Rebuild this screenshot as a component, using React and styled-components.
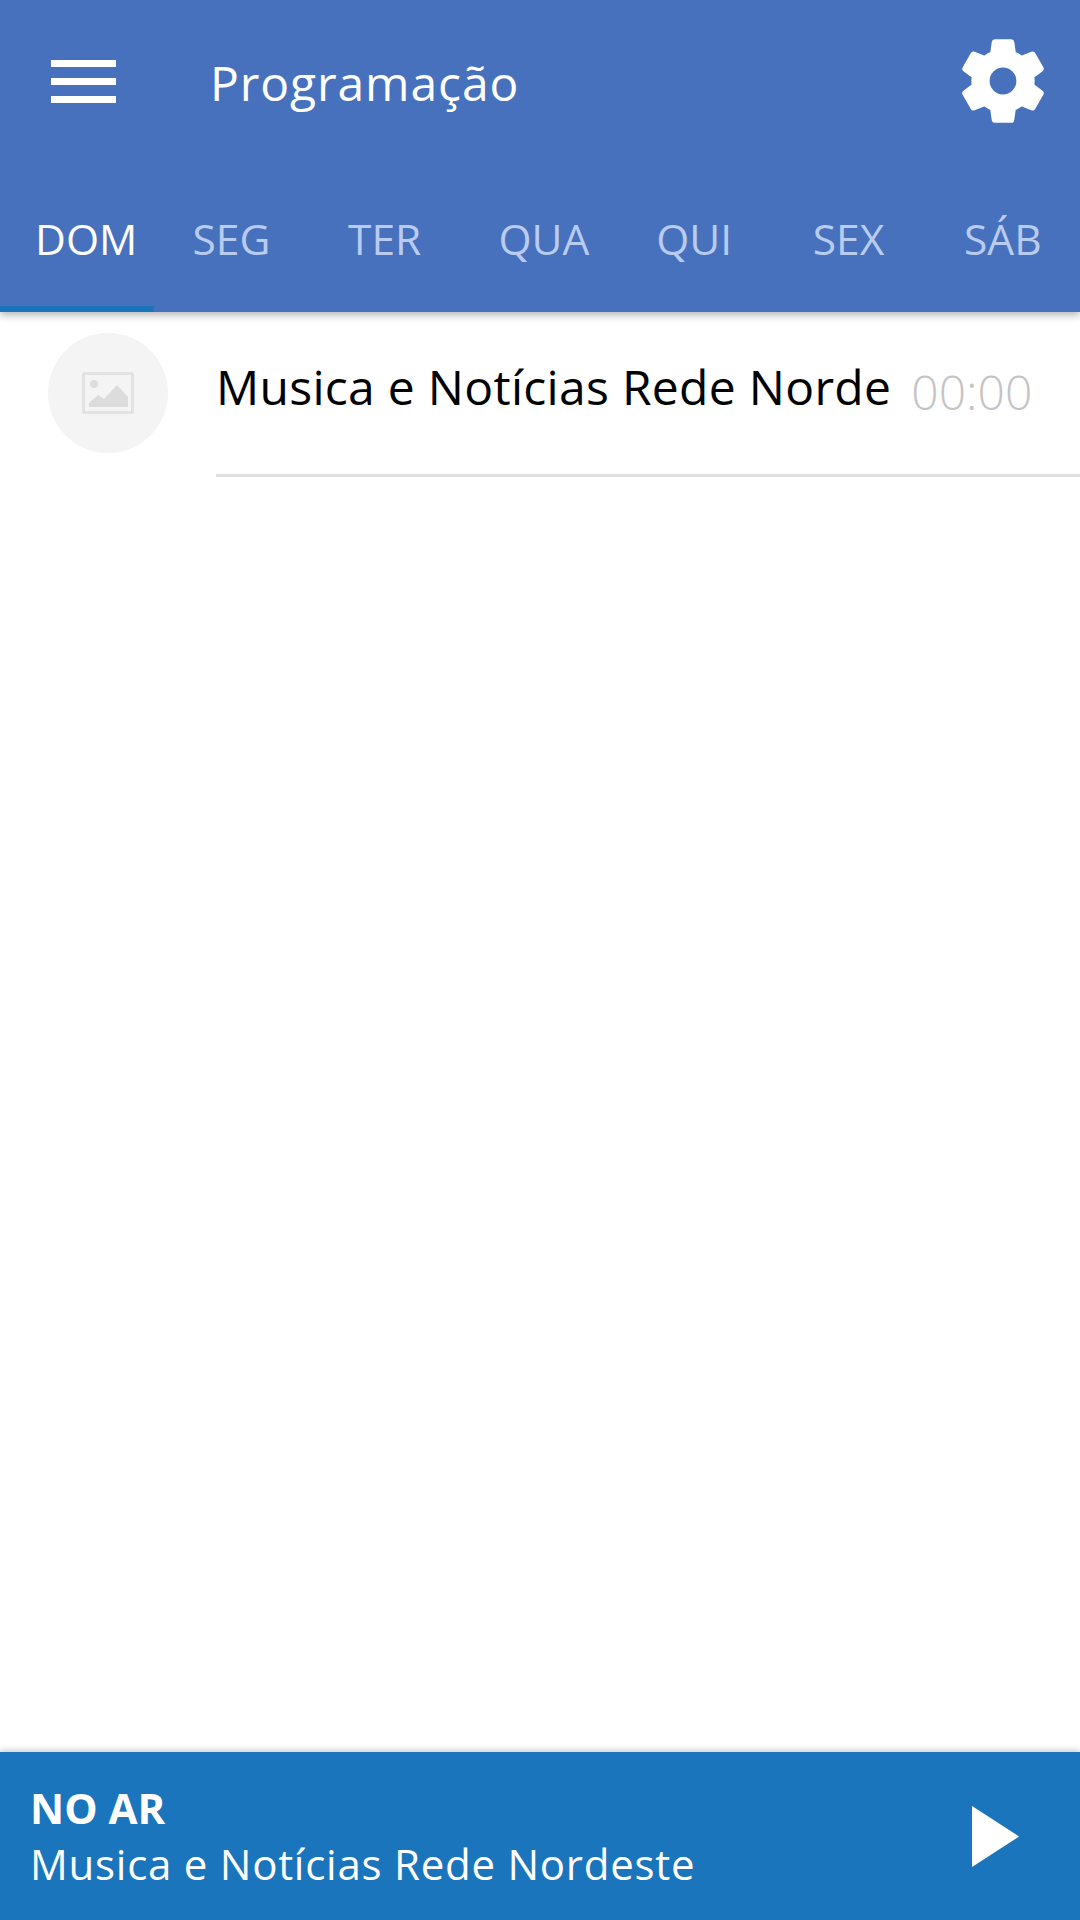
import React from "react";
import styled, { createGlobalStyle } from "styled-components";

const days = [
  { label: "DOM", active: true, shift: 18 },
  { label: "SEG" },
  { label: "TER", shift: -2 },
  { label: "QUA", shift: 8 },
  { label: "QUI" },
  { label: "SEX" },
  { label: "SÁB" },
];

const GlobalStyle = createGlobalStyle`
  * {
    box-sizing: border-box;
  }

  body {
    margin: 0;
    background: #fff;
    font-family: "Open Sans", sans-serif;
  }
`;

const App = () => {
  return (
    <>
      <GlobalStyle />
      <Page>
        <Header>
          <Toolbar>
            <MenuButton>
              <span />
              <span />
              <span />
            </MenuButton>
            <Title>Programação</Title>
            <SettingsIcon viewBox="0 0 24 24">
              <path
                fillRule="evenodd"
                stroke="#fff"
                strokeWidth="0.5"
                strokeLinejoin="round"
                d="M19.14 12.94c.04-.3.06-.61.06-.94 0-.32-.02-.64-.07-.94l2.03-1.58c.18-.14.23-.41.12-.61l-1.92-3.32c-.12-.22-.37-.29-.59-.22l-2.39.96c-.5-.38-1.03-.7-1.62-.94l-.36-2.54c-.04-.24-.24-.41-.48-.41h-3.84c-.24 0-.43.17-.47.41l-.36 2.54c-.59.24-1.13.57-1.62.94l-2.39-.96c-.22-.08-.47 0-.59.22L2.74 8.87c-.12.21-.08.47.12.61l2.03 1.58c-.05.3-.09.63-.09.94s.02.64.07.94l-2.03 1.58c-.18.14-.23.41-.12.61l1.92 3.32c.12.22.37.29.59.22l2.39-.96c.5.38 1.03.7 1.62.94l.36 2.54c.05.24.24.41.48.41h3.84c.24 0 .44-.17.47-.41l.36-2.54c.59-.24 1.13-.56 1.62-.94l2.39.96c.22.08.47 0 .59-.22l1.92-3.32c.12-.22.07-.47-.12-.61l-2.01-1.58zM12 15.4a3.4 3.4 0 1 1 0-6.8 3.4 3.4 0 0 1 0 6.8z"
              />
            </SettingsIcon>
          </Toolbar>
          <Tabs>
            {days.map((day) => (
              <Tab key={day.label} $active={day.active} $shift={day.shift || 0}>
                {day.label}
              </Tab>
            ))}
          </Tabs>
        </Header>

        <List>
          <ProgramRow>
            <Thumb>
              <svg width="52" height="42" viewBox="0 0 52 42">
                <rect
                  x="1.5"
                  y="1.5"
                  width="49"
                  height="39"
                  rx="1"
                  fill="none"
                  stroke="#e2e2e2"
                  strokeWidth="3"
                />
                <circle cx="12" cy="12" r="4" fill="#dcdcdc" />
                <path d="M7 35V31l9-8 6 4 13-14 11 12v10z" fill="#dcdcdc" />
              </svg>
            </Thumb>
            <ProgramBody>
              <ProgramName>Musica e Notícias Rede Norde</ProgramName>
              <ProgramTime>00:00</ProgramTime>
            </ProgramBody>
          </ProgramRow>
        </List>

        <Player>
          <PlayerText>
            <OnAir>NO AR</OnAir>
            <NowPlaying>Musica e Notícias Rede Nordeste</NowPlaying>
          </PlayerText>
          <svg width="47" height="61" viewBox="0 0 47 61">
            <path d="M0 0l47 30.5L0 61z" fill="#fff" />
          </svg>
        </Player>
      </Page>
    </>
  );
};

const Page = styled.div`
  width: 1080px;
  height: 1920px;
  display: flex;
  flex-direction: column;
  overflow: hidden;
`;

const Header = styled.header`
  background-color: #4771bd;
  box-shadow: 0 3px 8px rgba(0, 0, 0, 0.3);
  position: relative;
`;

const Toolbar = styled.div`
  height: 162px;
  display: flex;
  align-items: center;
  padding: 0 26px 0 51px;
`;

const MenuButton = styled.div`
  width: 65px;
  display: flex;
  flex-direction: column;
  gap: 11px;

  span {
    display: block;
    height: 7px;
    background: #fff;
  }
`;

const Title = styled.h1`
  flex: 1;
  margin: 3px 0 0 94px;
  font-size: 48px;
  font-weight: 400;
  color: #fff;
  letter-spacing: 0.9px;
`;

const SettingsIcon = styled.svg`
  width: 102px;
  height: 102px;
  fill: #fff;
`;

const Tabs = styled.nav`
  height: 150px;
  display: grid;
  grid-template-columns: repeat(7, 1fr);
`;

const Tab = styled.div`
  display: flex;
  align-items: center;
  justify-content: center;
  padding-left: ${(props) => (props.$shift > 0 ? props.$shift : 0)}px;
  padding-right: ${(props) => (props.$shift < 0 ? -props.$shift : 0)}px;
  padding-top: 9px;
  font-size: 42.5px;
  color: ${(props) => (props.$active ? "#fff" : "#b9cbee")};
  border-bottom: 6px solid ${(props) => (props.$active ? "#1a75bc" : "transparent")};
`;

const List = styled.main`
  flex: 1;
  background: #fff;
`;

const ProgramRow = styled.div`
  display: flex;
  padding: 21px 0 0 48px;
`;

const Thumb = styled.div`
  width: 120px;
  height: 120px;
  flex-shrink: 0;
  border-radius: 50%;
  background: #f4f4f4;
  display: flex;
  align-items: center;
  justify-content: center;
`;

const ProgramBody = styled.div`
  flex: 1;
  height: 144px;
  margin-left: 48px;
  padding-bottom: 24px;
  border-bottom: 3px solid #dfdfdf;
  display: flex;
  align-items: center;
`;

const ProgramName = styled.div`
  margin-bottom: 10px;
  font-size: 48px;
  letter-spacing: 0.3px;
  color: #000;
  white-space: nowrap;
`;

const ProgramTime = styled.div`
  margin-left: 20px;
  font-size: 48px;
  font-weight: 300;
  color: #c4c4c4;
`;

const Player = styled.footer`
  height: 168px;
  background-color: #1a75bc;
  box-shadow: 0 -2px 6px rgba(0, 0, 0, 0.2);
  display: flex;
  align-items: center;
  justify-content: space-between;
  padding: 0 61px 0 30px;
  position: relative;
  color: #fff;
`;

const PlayerText = styled.div`
  display: flex;
  flex-direction: column;
`;

const OnAir = styled.div`
  font-size: 42px;
  font-weight: 700;
  line-height: 56px;
`;

const NowPlaying = styled.div`
  font-size: 42px;
  line-height: 56px;
  letter-spacing: 0.75px;
`;

export default App;
